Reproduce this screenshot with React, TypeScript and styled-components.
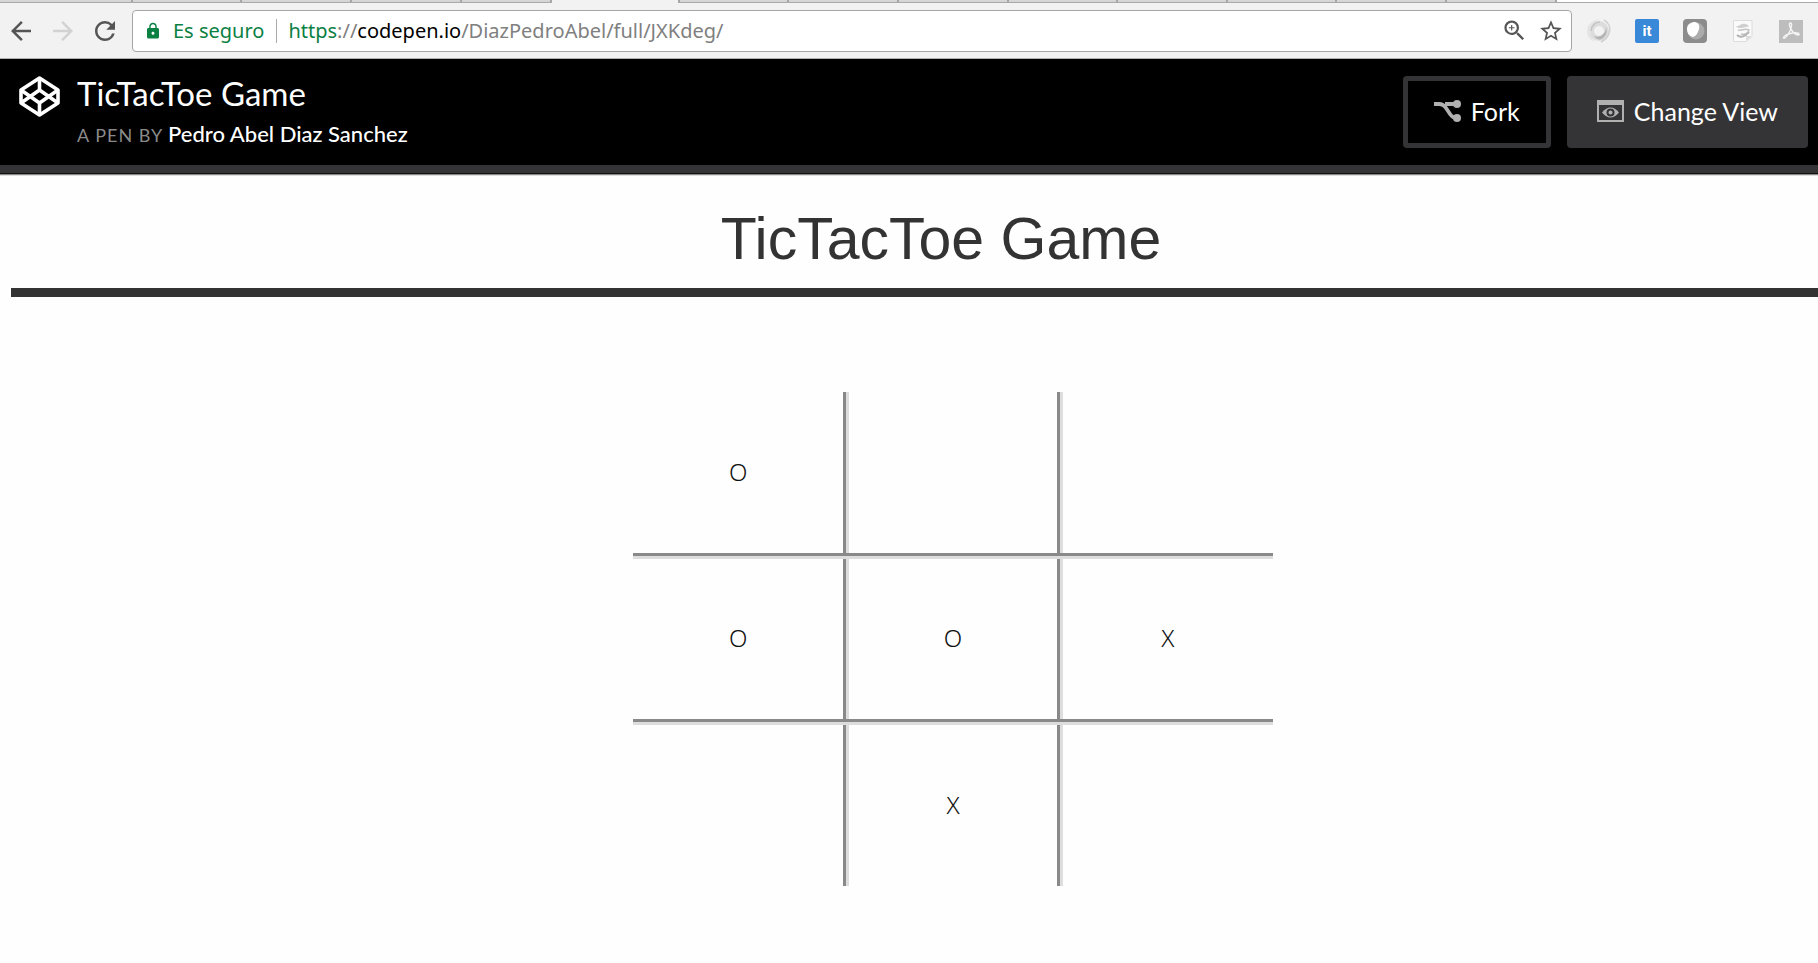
import React from "react";
import styled, { createGlobalStyle } from "styled-components";
import {
  MdArrowBack,
  MdArrowForward,
  MdLock,
  MdRefresh,
  MdStarBorder,
  MdZoomIn,
} from "react-icons/md";

const GlobalStyle = createGlobalStyle`
  *, *::before, *::after { box-sizing: border-box; }
  body {
    margin: 0;
    background: #fefefe;
    color: #333;
    font-family: "Noto Sans", "Open Sans", sans-serif;
    overflow-x: hidden;
  }
  button { font: inherit; cursor: pointer; }
`;

/* ---------- browser chrome ---------- */

const TabStrip = styled.div`
  display: flex;
  height: 3px;
  background: #fff;
  border-bottom: 1px solid #a9a9a9;
`;

const Tab = styled.div<{ $active?: boolean; $share: number }>`
  flex: 0 0 ${(p) => p.$share}%;
  background: ${(p) => (p.$active ? "#f2f2f2" : "#d6d6d6")};
  border-right: 2px solid #a6a6a6;
  margin-bottom: ${(p) => (p.$active ? "-1px" : "0")};
`;

const Toolbar = styled.div`
  display: flex;
  align-items: center;
  height: 56px;
  padding: 0 15px 0 6px;
  background: #f2f2f2;
  border-bottom: 1px solid #b0b0b0;
`;

const NavButtons = styled.div`
  display: flex;
  gap: 12px;
  margin-right: 12px;
`;

const IconButton = styled.button<{ $dim?: boolean }>`
  display: flex;
  align-items: center;
  justify-content: center;
  padding: 0;
  border: 0;
  background: none;
  color: ${(p) => (p.$dim ? "#d2d2d2" : "#555")};
`;

const AddressBar = styled.div`
  flex: 1;
  display: flex;
  align-items: center;
  height: 42px;
  padding: 0 7px 0 11px;
  background: #fff;
  border: 1px solid #a6a6a6;
  border-radius: 4px;
  font-size: 20px;
  line-height: 28px;
  white-space: nowrap;
`;

const Secure = styled.button`
  display: flex;
  align-items: center;
  gap: 11px;
  padding: 0 12px 0 0;
  border: 0;
  border-right: 1px solid #aaa;
  background: none;
  color: #0b8043;
  line-height: 24px;
`;

const Address = styled.div`
  flex: 1;
  margin-left: 11px;
  color: #808080;
  outline: none;
`;

const Scheme = styled.span`
  color: #0b8043;
`;

const Host = styled.span`
  color: #000;
`;

const AddressActions = styled.div`
  display: flex;
  align-items: center;
  gap: 10px;
`;

const Extensions = styled.div`
  display: flex;
  gap: 24px;
  margin-left: 15px;
`;

/* ---------- pen header ---------- */

const Header = styled.header`
  display: flex;
  align-items: flex-start;
  justify-content: space-between;
  height: 115px;
  padding: 17px 10px 0 19px;
  background: #000;
  border-bottom: 1px solid #111;
  box-shadow: inset 0 -8px 0 #343436, 0 1px 0 #888, 0 2px 0 #ddd;
  font-family: Lato, sans-serif;
`;

const Brand = styled.div`
  display: flex;
  gap: 17px;
`;

const LogoLink = styled.a`
  display: flex;
  height: 41px;
  color: #fff;
`;

const PenTitle = styled.h2`
  margin: 0;
  color: #fff;
  font-size: 33px;
  font-weight: 400;
  line-height: 34px;
`;

const Byline = styled.p`
  margin: 10px 0 0;
  color: #8a8a8a;
  font-size: 18px;
  line-height: 28px;
  letter-spacing: 1px;
`;

const Author = styled.a`
  color: #fff;
  font-size: 22px;
  font-weight: 500;
  letter-spacing: 0;
  text-decoration: none;
`;

const Actions = styled.div`
  display: flex;
  gap: 16px;
`;

const ActionButton = styled.button<{ $filled?: boolean }>`
  display: flex;
  align-items: center;
  justify-content: center;
  gap: 10px;
  height: 72px;
  padding: 0 ${(p) => (p.$filled ? 25 : 26)}px 2px;
  border: 5px solid #343436;
  border-radius: 4px;
  background: ${(p) => (p.$filled ? "#343436" : "#000")};
  color: #fff;
  font-size: 25px;
  line-height: 32px;
`;

/* ---------- game ---------- */

const Game = styled.main`
  width: calc(100% + 42px);
  margin-left: 11px;
`;

const GameTitle = styled.h1`
  margin: 0;
  padding: 31px 0 14px;
  border-bottom: 9px solid #333;
  font-family: "Liberation Sans", Arial, sans-serif;
  font-size: 59px;
  font-weight: 400;
  line-height: 69px;
  text-align: center;
`;

const BoardArea = styled.div`
  display: flex;
  justify-content: center;
  padding: 95px 0 64px 24px;
`;

const Board = styled.table`
  width: 640px;
  border-collapse: collapse;
  table-layout: fixed;
`;

const Cell = styled.td`
  height: 166px;
  padding: 0;
  border: 6px groove #ddd;

  tr:first-child > & { height: 164px; border-top: 0; }
  tr:last-child > & { height: 164px; border-bottom: 0; }
  &:first-child { border-left: 0; }
  &:last-child { border-right: 0; }
`;

const Mark = styled.button`
  display: block;
  width: 100%;
  height: 160px;
  padding: 0 0 3px;
  border: 0;
  background: none;
  color: #111;
  font-size: 24px;
  font-weight: 300;
`;

const CodePenLogo = () => (
  <svg width="41" height="41" viewBox="0 0 41 41" fill="none" stroke="currentColor" strokeWidth="3.6" strokeLinejoin="round">
    <path d="M20.5 2 39 14v13L20.5 39 2 27V14z" />
    <path d="M20.5 2v12M20.5 27v12M39 27 20.5 14 2 27M2 14l18.500 13L39 14" />
  </svg>
);

const ForkIcon = () => (
  <svg width="27" height="22" viewBox="0 0 27 22" fill="none" stroke="#b0b0b0">
    <path d="M0 4h5c3 0 5 1 7 4l4 6c2 3 4 4 7 4M11 4h12" strokeWidth="3.800" />
    <circle cx="23" cy="4" r="4" fill="#b0b0b0" stroke="none" />
    <circle cx="23" cy="18" r="4" fill="#b0b0b0" stroke="none" />
  </svg>
);

const ViewIcon = () => (
  <svg width="27" height="22" viewBox="0 0 27 22">
    <path d="M0 0h27v22H0zM2 5v15h23V5z" fill="#b0b0b0" fillRule="evenodd" />
    <path d="M5 12.500q8.500-10 17 0q-8.500 10-17 0z" fill="#b0b0b0" />
    <circle cx="13.500" cy="12.500" r="4" fill="#343436" />
    <circle cx="13.500" cy="12.500" r="2" fill="#b0b0b0" />
  </svg>
);

const SwirlIcon = () => (
  <svg width="24" height="24" viewBox="0 0 24 24" fill="none">
    <circle cx="12" cy="12" r="7.500" stroke="#dcdcdc" strokeWidth="5" />
    <path d="M13 0C5 1 0 6 0 12c0 5 3 9 8 11-4-4-5-8-4-12 1-5 5-9 9-11z" fill="#e4e4e4" />
    <path d="M4 12c0-5 4-9 9-9" stroke="#c4c4c4" strokeWidth="1.500" />
    <path d="M19 8c2 5 0 9-4 12-3 1-6 0-8-3 3 1 6 1 8-1 3-2 4-5 4-8z" fill="#b4b4b4" />
    <path d="M17 1c5 3 7 8 5 13-1 4-4 7-8 9" stroke="#cfcfcf" strokeWidth="1.500" />
  </svg>
);

const ItBadge = styled.span`
  display: flex;
  align-items: center;
  justify-content: center;
  width: 24px;
  height: 24px;
  border-radius: 2px;
  background: #3a88d8;
  color: #fff;
  font-family: Roboto, sans-serif;
  font-size: 15px;
  font-weight: 700;
  line-height: 24px;
`;

const LeafIcon = () => (
  <svg width="24" height="24" viewBox="0 0 24 24">
    <rect width="24" height="24" rx="4" fill="#8c8c8c" />
    <circle cx="13" cy="12" r="8.500" fill="#acacac" />
    <path d="M4 10c0-5 4-7 8-7 4 1 5 4 4 7-1 4-3 7-6 8-4-1-6-4-6-8z" fill="#fff" />
  </svg>
);

const SheetIcon = () => (
  <svg width="24" height="24" viewBox="0 0 24 24" fill="none">
    <path d="M2.500 1.500h18.500v16l-6 5H2.500z" fill="#fafafa" stroke="#dcdcdc" />
    <path d="M5 7c3 1 5-3 9-2 2 0 3 1 4 3-3-1-5 1-8 1-2 0-4 0-5-2z" fill="#cfcfcf" />
    <path d="M7 11c4 1 6-2 11 0-1 3-4 5-8 4" stroke="#c4c4c4" strokeWidth="1.500" />
    <path d="M6 16c3 3 8 2 12-3" stroke="#b4b4b4" strokeWidth="2" />
    <path d="M15 22v-5h6z" fill="#ddd" />
  </svg>
);

const PdfIcon = () => (
  <svg width="24" height="24" viewBox="0 0 24 24" fill="none">
    <path d="M0 1h24v23H0z" fill="#bdbdbd" />
    <path
      d="M11.500 4c-2 0-1 4 1 7s5 5 7 5c2-1-1-3-6-2s-9 3-9 5c1 1 4-2 6-6s3-9 1-9z"
      stroke="#f4f4f4"
      strokeWidth="1.400"
    />
  </svg>
);

const marks = [
  ["O", "", ""],
  ["O", "O", "X"],
  ["", "X", ""],
];

const ACTIVE_TAB = 5;
const tabShares = [7.3, 6.03, 6.03, 6.03, 5, 7, ...Array(8).fill(6.03)];

export default function App() {
  return (
    <>
      <GlobalStyle />
      <TabStrip>
        {tabShares.map((share, i) => (
          <Tab key={i} $share={share} $active={i === ACTIVE_TAB} />
        ))}
      </TabStrip>
      <Toolbar>
        <NavButtons>
          <IconButton aria-label="Back"><MdArrowBack size={30} /></IconButton>
          <IconButton aria-label="Forward" $dim><MdArrowForward size={30} /></IconButton>
          <IconButton aria-label="Reload"><MdRefresh size={30} /></IconButton>
        </NavButtons>
        <AddressBar>
          <Secure><MdLock size={18} />Es seguro</Secure>
          <Address role="textbox" aria-label="Address" contentEditable suppressContentEditableWarning spellCheck={false}>
            <Scheme>https</Scheme>://<Host>codepen.io</Host>/DiazPedroAbel/full/JXKdeg/
          </Address>
          <AddressActions>
            <IconButton aria-label="Zoom"><MdZoomIn size={27} /></IconButton>
            <IconButton aria-label="Bookmark"><MdStarBorder size={26} /></IconButton>
          </AddressActions>
        </AddressBar>
        <Extensions>
          <IconButton aria-label="Swirl extension"><SwirlIcon /></IconButton>
          <IconButton aria-label="it extension"><ItBadge>it</ItBadge></IconButton>
          <IconButton aria-label="Leaf extension"><LeafIcon /></IconButton>
          <IconButton aria-label="Sheet extension"><SheetIcon /></IconButton>
          <IconButton aria-label="PDF extension"><PdfIcon /></IconButton>
        </Extensions>
      </Toolbar>

      <Header>
        <Brand>
          <LogoLink href="#" aria-label="CodePen"><CodePenLogo /></LogoLink>
          <div>
            <PenTitle>TicTacToe Game</PenTitle>
            <Byline>A PEN BY <Author href="#">Pedro Abel Diaz Sanchez</Author></Byline>
          </div>
        </Brand>
        <Actions>
          <ActionButton><ForkIcon />Fork</ActionButton>
          <ActionButton $filled><ViewIcon />Change View</ActionButton>
        </Actions>
      </Header>

      <Game>
        <GameTitle>TicTacToe Game</GameTitle>
        <BoardArea>
          <Board>
            <tbody>
              {marks.map((row, r) => (
                <tr key={r}>
                  {row.map((mark, c) => (
                    <Cell key={c}>
                      <Mark aria-label={`Row ${r + 1}, column ${c + 1}`}>{mark}</Mark>
                    </Cell>
                  ))}
                </tr>
              ))}
            </tbody>
          </Board>
        </BoardArea>
      </Game>
    </>
  );
}
